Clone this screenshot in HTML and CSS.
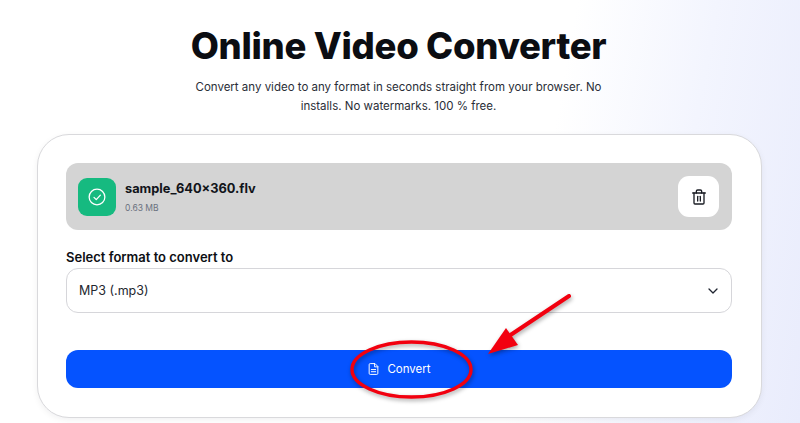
FILE: index.html
```html
<!DOCTYPE html>
<html lang="en">
<head>
<meta charset="utf-8">
<title>Online Video Converter</title>
<link rel="stylesheet" href="styles.css">
</head>
<body>
<main class="page">
  <header class="intro">
    <h1 class="title">Online Video Converter</h1>
    <p class="lead">Convert any video to any format in seconds straight from your browser. No installs. No watermarks. 100 % free.</p>
  </header>
  <section class="card">
    <div class="file">
      <div class="file-badge">
        <svg width="18" height="18" viewBox="0 0 24 24" fill="none" stroke="#fff" stroke-width="1.7" stroke-linecap="round" stroke-linejoin="round"><circle cx="12" cy="12" r="10.5"/><path d="m8 12.5 3 3 5.5-6"/></svg>
      </div>
      <div class="file-info">
        <div class="file-name">sample_640×360.flv</div>
        <div class="file-size">0.63 MB</div>
      </div>
      <button class="trash" type="button" aria-label="Remove">
        <svg width="16" height="16" viewBox="0 0 24 24" fill="none" stroke="#1a1d24" stroke-width="2" stroke-linecap="round" stroke-linejoin="round"><path d="M2.5 6h19"/><path d="M4.5 6v15a1.5 1.5 0 0 0 1.5 1.5h12a1.5 1.5 0 0 0 1.5-1.5V6"/><path d="M8 6V3.5A2 2 0 0 1 10 1.5h4a2 2 0 0 1 2 2V6"/><path d="M10 11v7"/><path d="M14 11v7"/></svg>
      </button>
    </div>
    <label class="field-label">Select format to convert to</label>
    <div class="select">
      <span>MP3 (.mp3)</span>
      <svg width="12" height="12" viewBox="0 0 24 24" fill="none" stroke="#1f2430" stroke-width="2.6" stroke-linecap="round" stroke-linejoin="round"><path d="m4 8 8 8 8-8"/></svg>
    </div>
    <button class="convert" type="button">
      <svg width="13" height="14" viewBox="0 0 24 24" fill="none" stroke="#fff" stroke-width="1.8" stroke-linecap="round" stroke-linejoin="round"><path d="M14 2H6a2 2 0 0 0-2 2v16a2 2 0 0 0 2 2h12a2 2 0 0 0 2-2V8z"/><path d="M14 2v6h6"/><path d="M8 13h8"/><path d="M8 17h8"/></svg>
      <span>Convert</span>
    </button>
  </section>
</main>
<svg class="annotation" width="800" height="423" viewBox="0 0 800 423" fill="none">
  <ellipse cx="411.5" cy="369.5" rx="59.5" ry="27.5" stroke="#f2000f" stroke-width="3.4"/>
  <path d="M569 296 503 340" stroke="#f2000f" stroke-width="4" stroke-linecap="round"/>
  <path d="M488 354 506 328 518 345z" fill="#f2000f"/>
</svg>
</body>
</html>
```
FILE: styles.css
```css
* { box-sizing: border-box; }
html, body { margin: 0; height: 423px; overflow: hidden; }
body {
  background: linear-gradient(100deg, #fff 0%, #fff 66%, #f3f5fe 82%, #e9ecfc 100%);
  font-family: Inter, "Liberation Sans", sans-serif;
  color: #0d0f14;
  position: relative;
}
.page {
  display: flex;
  flex-direction: column;
  align-items: center;
  padding: 22px 38px 0 37px;
}
.intro {
  display: flex;
  flex-direction: column;
  align-items: center;
  padding-right: 2px;
}
.title {
  margin: 0;
  font-size: 36.5px;
  line-height: 48px;
  font-weight: 800;
  color: #0b0d12;
  letter-spacing: -0.3px;
}
.lead {
  margin: 8px 0 0;
  width: 420px;
  text-align: center;
  font-size: 11.5px;
  line-height: 19px;
  color: #2a2e37;
}
.card {
  width: 725px;
  height: 284px;
  margin-top: 18px;
  padding: 28px 29px 0 28px;
  background: #fff;
  border: 1px solid #d9d9dc;
  border-radius: 32px;
  box-shadow: 0 2px 6px rgba(20, 20, 40, 0.06);
  display: flex;
  flex-direction: column;
}
.file {
  height: 67px;
  background: #d4d4d4;
  border-radius: 12px;
  display: flex;
  align-items: center;
  padding: 0 13px 0 12px;
}
.file-badge {
  width: 38px;
  height: 38px;
  border-radius: 9px;
  background: #16ba80;
  display: flex;
  align-items: center;
  justify-content: center;
}
.file-info { margin-left: 9px; flex: 1; }
.file-name { font-size: 12.8px; line-height: 18px; font-weight: 700; color: #12141a; }
.file-size { font-size: 8.5px; line-height: 12px; margin-top: 4px; color: #6b7280; }
.trash {
  width: 41px;
  height: 41px;
  border: 0;
  border-radius: 11px;
  background: #fff;
  display: flex;
  align-items: center;
  justify-content: center;
  padding: 0;
}
.field-label {
  margin-top: 19px;
  font-size: 13px;
  line-height: 17px;
  font-weight: 600;
  color: #0d0f14;
}
.select {
  height: 45px;
  margin-top: 2px;
  border: 1px solid #d6d6da;
  border-radius: 12px;
  display: flex;
  align-items: center;
  justify-content: space-between;
  padding: 0 12px;
  font-size: 12.5px;
  color: #23262e;
}
.convert {
  height: 38px;
  margin-top: 37px;
  border: 0;
  border-radius: 12px;
  background: #0553ff;
  color: #fff;
  font-family: inherit;
  font-size: 11.5px;
  font-weight: 400;
  display: flex;
  align-items: center;
  justify-content: center;
  gap: 7px;
  padding: 0;
}
.annotation {
  position: absolute;
  left: 0;
  top: 0;
  filter: drop-shadow(1px 2px 2px rgba(0, 0, 0, 0.35));
}
```
